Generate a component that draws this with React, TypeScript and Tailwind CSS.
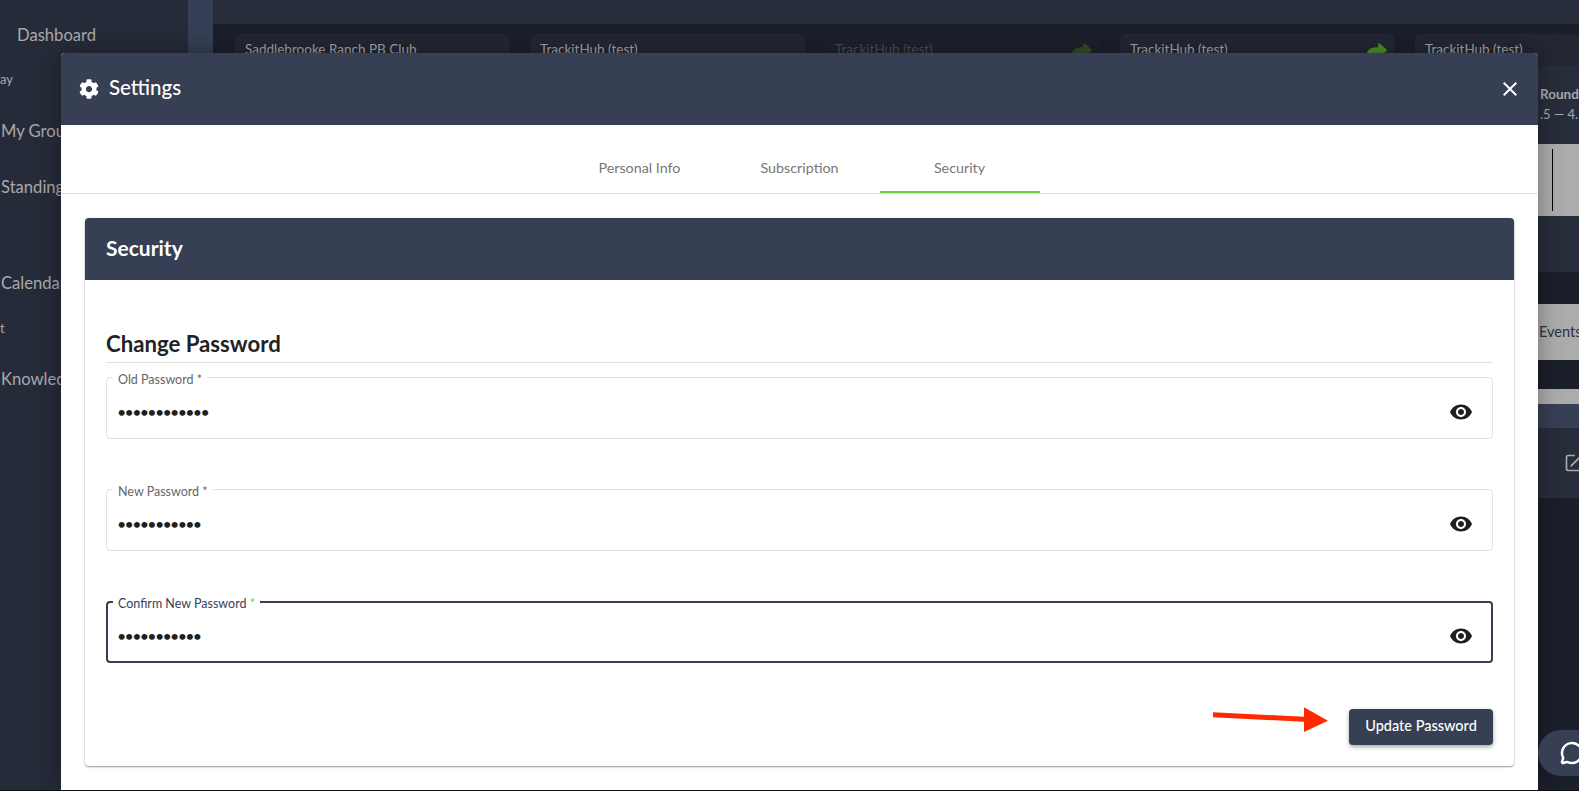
import { FaCog, FaShare } from "react-icons/fa";
import { MessageCircle } from "lucide-react";

const eyePath =
  "M12 4.5C7 4.5 2.73 7.61 1 12c1.73 4.39 6 7.5 11 7.5s9.27-3.11 11-7.5c-1.73-4.39-6-7.5-11-7.5zM12 17c-2.76 0-5-2.24-5-5s2.24-5 5-5 5 2.24 5 5-2.24 5-5 5zm0-8c-1.66 0-3 1.34-3 3s1.34 3 3 3 3-1.34 3-3-1.34-3-3-3z";
const closePath =
  "M19 6.41 17.59 5 12 10.59 6.41 5 5 6.41 10.59 12 5 17.59 6.41 19 12 13.41 17.59 19 19 17.59 13.41 12z";

function Sidebar() {
  return (
    <aside className="w-[188px] shrink-0 bg-[#262b39] text-[#a9a9ad] whitespace-nowrap overflow-hidden pt-[23px]">
      <div className="pl-[17px] text-[16.6px] leading-6">Dashboard</div>
      <div className="mt-[23px] text-[13px] leading-[18px]">ay</div>
      <div className="mt-[31px] pl-px text-[16.6px] leading-6">My Groups</div>
      <div className="mt-[32px] pl-px text-[16.6px] leading-6">Standings</div>
      <div className="mt-[72px] pl-px text-[16.6px] leading-6">Calendar</div>
      <div className="mt-[24px] text-[13px] leading-[18px]">t</div>
      <div className="mt-[30px] pl-px text-[16.6px] leading-6">Knowledge</div>
    </aside>
  );
}

function ClubCard({ name, dim, arrow }: { name: string; dim?: boolean; arrow?: boolean }) {
  return (
    <div
      className={`relative h-[32px] w-[275px] shrink-0 rounded-t-md pl-[10px] pt-[5px] text-[13.5px] leading-5 ${
        dim ? "bg-[#1d212c] text-[#4a4d55]" : "bg-[#232733] text-[#a3a4a8]"
      }`}
    >
      {name}
      {arrow && (
        <FaShare
          className={`absolute right-[8px] top-[8px] text-[20px] ${dim ? "text-[#2f4d26]" : "text-[#4a8f28]"}`}
        />
      )}
    </div>
  );
}

function BackgroundPage() {
  return (
    <main className="flex-1 min-w-0 overflow-hidden bg-[#1b1f2a]">
      <div className="h-[24px] bg-[#272d3a]" />
      <div className="flex gap-5 pl-[22px] pt-[10px]">
        <ClubCard name="Saddlebrooke Ranch PB Club" />
        <ClubCard name="TrackitHub (test)" />
        <ClubCard name="TrackitHub (test)" dim arrow />
        <ClubCard name="TrackitHub (test)" arrow />
        <ClubCard name="TrackitHub (test)" />
      </div>
      <div className="ml-[1300px] whitespace-nowrap">
        <div className="h-[78px] bg-[#272d3a] pl-[27px] pt-[19px] text-[#a9a9ad]">
          <div className="text-[13.5px] font-bold leading-[18px]">Round</div>
          <div className="pt-px text-[13px] leading-5">.5 — 4.5</div>
        </div>
        <div className="h-[72px] bg-[#acacac] pl-[39px] pt-[5px]">
          <div className="h-[62px] w-px bg-black" />
        </div>
        <div className="h-[56px] bg-[#272d3a]" />
        <div className="mt-[32px] flex h-[56px] items-center bg-[#acacac] pl-[26px] text-[14.5px] text-[#2c3140]">
          Events
        </div>
        <div className="mt-[29px] h-[15px] bg-[#acacac]" />
        <div className="h-[24px] bg-[#373f54]" />
        <div className="h-[70px] bg-[#272d3a] pl-[51px] pt-[25px]">
          <svg viewBox="0 0 24 24" className="size-5 fill-none stroke-[#a9a9ad] stroke-2">
            <path d="M13 3H5a2 2 0 0 0-2 2v14a2 2 0 0 0 2 2h14a2 2 0 0 0 2-2v-8M8 16 20 4" />
          </svg>
        </div>
      </div>
    </main>
  );
}

function PasswordField({
  label,
  value,
  focused,
  className,
}: {
  label: string;
  value: string;
  focused?: boolean;
  className?: string;
}) {
  return (
    <div
      className={`relative flex h-[62px] items-center rounded pt-[7px] ${
        focused ? "border-2 border-[#373f54] pl-[9px] pr-[18px]" : "border border-[#e2e2e2] pl-[10px] pr-[19px]"
      } ${className ?? ""}`}
    >
      <label
        className={`absolute bg-white px-[5px] text-[12.5px] leading-4 ${
          focused ? "-top-[7px] left-[5px] text-[#373f54]" : "-top-[6px] left-[6px] text-[#666]"
        }`}
      >
        {label} <span className={focused ? "text-[#6fce3f]" : ""}>*</span>
      </label>
      <input
        type="password"
        readOnly
        value={value}
        className="min-w-0 flex-1 bg-transparent text-base tracking-[-1.7px] text-[#1f1f1f] outline-none"
      />
      <svg viewBox="0 0 24 24" className="size-6 shrink-0 fill-[#1f1f1f]">
        <path d={eyePath} />
      </svg>
    </div>
  );
}

function SettingsModal() {
  return (
    <div className="absolute left-[61px] top-[53px] flex h-[737px] w-[1477px] flex-col overflow-hidden rounded-t bg-white shadow-[0_0_24px_rgba(0,0,0,0.35)]">
      <header className="flex h-[72px] shrink-0 items-center justify-between bg-[#373f54] pl-[18px] pr-[16px] text-white">
        <div className="flex items-center gap-[10px]">
          <FaCog className="text-[20px]" />
          <span className="pb-[5px] text-[20.5px] font-medium leading-7">Settings</span>
        </div>
        <svg viewBox="0 0 24 24" className="size-6 fill-white">
          <path d={closePath} />
        </svg>
      </header>

      <nav className="flex h-[69px] shrink-0 justify-center border-b border-[#e0e0e0]">
        {["Personal Info", "Subscription", "Security"].map((tab) => (
          <div
            key={tab}
            className={`flex w-[160px] items-center justify-center pt-[20px] text-[14.3px] text-[#777] ${
              tab === "Security" ? "border-b-2 border-[#6fce3f]" : "border-b-2 border-transparent"
            }`}
          >
            {tab}
          </div>
        ))}
      </nav>

      <div className="px-6 pt-[24px]">
        <section className="rounded bg-white shadow-[0_1px_2px_rgba(0,0,0,0.4),0_0_2px_rgba(0,0,0,0.08)]">
          <div className="flex h-[62px] items-center rounded-t bg-[#373f54] pb-[3px] pl-[21px] text-[21px] font-bold text-white">
            Security
          </div>
          <div className="px-[21px] pb-[21px] pt-[49px]">
            <h3 className="h-[34px] border-b border-[#e0e0e0] text-[22.2px] font-bold leading-[30px] text-[#222]">
              Change Password
            </h3>
            <PasswordField label="Old Password" value="oldpassword1" className="mt-[14px]" />
            <PasswordField label="New Password" value="newpassword" className="mt-[50px]" />
            <PasswordField label="Confirm New Password" value="newpassword" focused className="mt-[50px]" />
            <div className="mt-[46px] flex items-center justify-end gap-[21px]">
              <svg width="115" height="36" viewBox="0 0 115 36" className="overflow-visible">
                <polygon
                  points="0,3.3 91,7.7 91,-1.7 115,11.7 91,23 91,12.7 0,8.3"
                  className="fill-[#ff2a00]"
                />
              </svg>
              <button className="h-9 w-[144px] rounded bg-[#373f54] pb-[2px] text-[14.5px] font-medium text-white shadow-[0_2px_4px_rgba(0,0,0,0.35)]">
                Update Password
              </button>
            </div>
          </div>
        </section>
      </div>
    </div>
  );
}

export default function App() {
  return (
    <div className="relative h-screen w-screen overflow-hidden bg-[#111] font-[Lato,sans-serif]">
      <div className="flex h-[790px]">
        <Sidebar />
        <div className="w-[25px] shrink-0 bg-[#353f55]" />
        <BackgroundPage />
      </div>
      <SettingsModal />
      <div className="absolute left-[1538px] top-[730px] h-[46px] w-[60px] rounded-l-full bg-[#373f54] pl-[22px] pt-[11px]">
        <MessageCircle className="size-6 text-white" strokeWidth={2.5} />
      </div>
    </div>
  );
}
